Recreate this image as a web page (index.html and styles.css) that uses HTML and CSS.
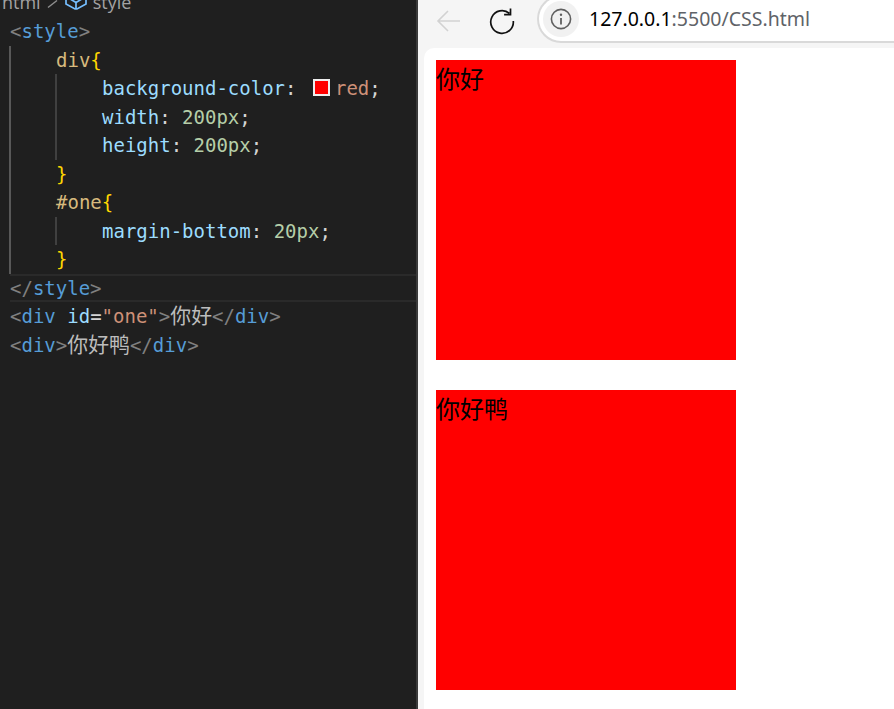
FILE: index.html
```html
<!DOCTYPE html>
<html lang="zh">
<head>
<meta charset="utf-8">
<title>CSS</title>
<link rel="stylesheet" href="styles.css">
</head>
<body>
<div class="app">
  <section class="editor">
    <div class="crumbs">
      <span>html</span>
      <svg class="crumb-sep" width="12" height="12" viewBox="0 0 12 12"><path d="M1 9.500l9-7" fill="none" stroke="#8f8f8f" stroke-width="1.400"/></svg>
      <svg class="cube" width="24" height="12" viewBox="0 0 24 12"><path d="M12 -8l10 4.500v7.500l-9 5h-2l-9-5v-7.500zM2 -3.500l10 6 10-6M12 2.500v7" fill="none" stroke="#75beff" stroke-width="1.700"/></svg>
      <span>style</span>
    </div>
    <div class="code">
      <div class="line"><span class="punc">&lt;</span><span class="tag">style</span><span class="punc">&gt;</span></div>
      <div class="guide outer">
        <div class="line"><span class="sel">div</span><span class="brace">{</span></div>
        <div class="guide inner">
          <div class="line"><span class="prop">background-color</span><span class="txt">:</span> <span class="swatch"></span><span class="str">red</span><span class="txt">;</span></div>
          <div class="line"><span class="prop">width</span><span class="txt">:</span> <span class="num">200px</span><span class="txt">;</span></div>
          <div class="line"><span class="prop">height</span><span class="txt">:</span> <span class="num">200px</span><span class="txt">;</span></div>
        </div>
        <div class="line"><span class="brace">}</span></div>
        <div class="line"><span class="sel">#one</span><span class="brace">{</span></div>
        <div class="guide inner">
          <div class="line"><span class="prop">margin-bottom</span><span class="txt">:</span> <span class="num">20px</span><span class="txt">;</span></div>
        </div>
        <div class="line"><span class="brace">}</span></div>
      </div>
      <div class="line active"><span class="punc">&lt;/</span><span class="tag">style</span><span class="punc">&gt;</span></div>
      <div class="line"><span class="punc">&lt;</span><span class="tag">div</span> <span class="prop">id</span><span class="txt">=</span><span class="str">"one"</span><span class="punc">&gt;</span><span class="cjk">你好</span><span class="punc">&lt;/</span><span class="tag">div</span><span class="punc">&gt;</span></div>
      <div class="line"><span class="punc">&lt;</span><span class="tag">div</span><span class="punc">&gt;</span><span class="cjk">你好鸭</span><span class="punc">&lt;/</span><span class="tag">div</span><span class="punc">&gt;</span></div>
    </div>
  </section>
  <section class="browser">
    <header class="toolbar">
      <svg class="back" width="26" height="24" viewBox="0 0 26 24"><path d="M24 12H2M12 2L2 12l10 10" fill="none" stroke="#d2d2d2" stroke-width="1.600"/></svg>
      <svg class="reload" width="28" height="28" viewBox="0 0 28 28"><path d="M21.500 6.500A11.300 11.300 0 1 0 25.300 14" fill="none" stroke="#111" stroke-width="1.700"/><path d="M22.500 1.500v6.200h-6.400" fill="none" stroke="#111" stroke-width="1.700"/></svg>
      <div class="address">
        <span class="info"><svg width="22" height="22" viewBox="0 0 22 22"><circle cx="11" cy="11" r="9.600" fill="none" stroke="#5f5f5f" stroke-width="1.600"/><path d="M11 10v6.500" stroke="#5f5f5f" stroke-width="1.800"/><circle cx="11" cy="6.800" r="1.200" fill="#5f5f5f"/></svg></span>
        <span class="url"><span class="host">127.0.0.1</span>:5500/CSS.html</span>
      </div>
    </header>
    <main class="page">
      <div class="box first">你好</div>
      <div class="box">你好鸭</div>
    </main>
  </section>
</div>
</body>
</html>
```
FILE: styles.css
```css
html, body { margin: 0; padding: 0; height: 100%; overflow: hidden; }
.app {
  display: grid;
  grid-template-columns: 418px 1fr;
  width: 894px;
  height: 709px;
  overflow: hidden;
}
.editor {
  background: #1f1f1f;
  border-right: 2px solid #3a3a3a;
  box-sizing: border-box;
  overflow: hidden;
  color: #d4d4d4;
}
.crumbs {
  height: 17px;
  display: flex;
  align-items: flex-start;
  margin-left: 2px;
  font: 18px/4px "Open Sans", sans-serif;
  color: #a3a3a3;
  overflow: hidden;
}
.crumb-sep { flex: none; margin: -2px 5px 0 6px; }
.cube { flex: none; margin-right: 5px; }
.code {
  font: 19px/28.5px "DejaVu Sans Mono", "Noto Sans CJK SC", monospace;
}
.line { height: 28.5px; white-space: pre; padding-left: 10px; }
.guide { border-left: 2px solid #585858; }
.outer { margin-left: 9px; padding-left: 44px; }
.outer > .line { padding-left: 1px; }
.inner { border-left-color: #404040; padding-left: 45px; }
.inner > .line { padding-left: 0; }
.active {
  box-shadow: inset 0 2px 0 #2a2a2a, inset 0 -2px 0 #2a2a2a;
  margin-left: 10px;
  padding-left: 0;
}
.punc { color: #808080; }
.tag { color: #569cd6; }
.sel { color: #d7ba7d; }
.brace { color: #ffd700; }
.prop { color: #9cdcfe; }
.txt { color: #d4d4d4; }
.num { color: #b5cea8; }
.str { color: #ce9178; }
.cjk { font-size: 20.9px; color: #bcbcbc; }
.swatch {
  display: inline-block;
  box-sizing: border-box;
  width: 17px;
  height: 17px;
  margin: 0 5px;
  vertical-align: -1px;
  background: #ff0000;
  border: 2px solid #eee;
}
.browser {
  background: #f5f5f5;
  display: flex;
  flex-direction: column;
  min-width: 0;
}
.toolbar {
  height: 48px;
  flex: none;
  display: flex;
  align-items: center;
}
.back { flex: none; margin: 0 0 6px 18px; }
.reload { flex: none; margin: 0 0 6px 26px; }
.address {
  display: flex;
  align-items: center;
  flex: none;
  width: 420px;
  height: 48px;
  margin: -10px 0 0 21px;
  box-sizing: border-box;
  background: #fff;
  border: 2px solid #d9d9d9;
  border-right: 0;
  border-radius: 24px 0 0 24px;
  padding-left: 4px;
}
.info {
  flex: none;
  width: 36px;
  height: 36px;
  border-radius: 50%;
  background: #f1f1f1;
  display: flex;
  align-items: center;
  justify-content: center;
}
.url {
  margin-left: 10px;
  font: 19.5px/28px "Noto Sans", sans-serif;
  color: #5f6368;
  white-space: nowrap;
}
.host { color: #000; }
.page {
  flex: 1;
  margin-left: 6px;
  background: #fff;
  border-radius: 10px 0 0 0;
  padding: 12px;
  font: 24px/36px "Noto Sans CJK SC", sans-serif;
  color: #000;
}
.box {
  width: 300px;
  height: 300px;
  background: #ff0000;
}
.first { margin-bottom: 30px; }
```
